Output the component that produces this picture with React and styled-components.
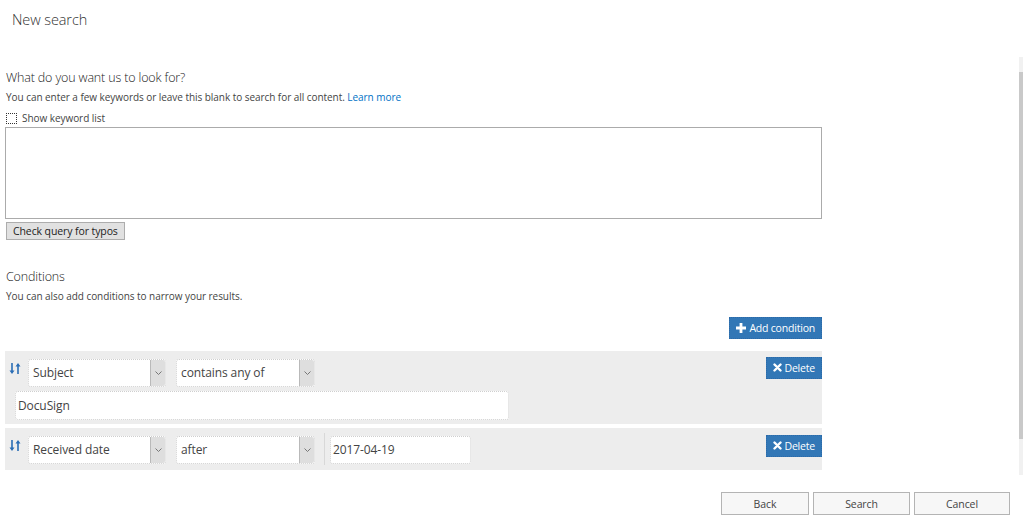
import React from 'react';
import styled, { createGlobalStyle } from 'styled-components';

const GlobalStyle = createGlobalStyle`
  html, body {
    margin: 0;
    padding: 0;
    background: #ffffff;
  }

  body {
    font-family: "Open Sans", "Noto Sans", sans-serif;
    color: #333;
  }
`;

const Page = styled.div`
  display: flex;
  width: 1024px;
  height: 521px;
  overflow: hidden;
`;

const Main = styled.main`
  flex: 1;
  padding-left: 5px;
`;

const Title = styled.h1`
  margin: 0;
  padding: 10px 0 0 7px;
  height: 69px;
  box-sizing: border-box;
  font-size: 14.5px;
  font-weight: 300;
  color: #333;
  letter-spacing: -0.1px;
`;

const Section = styled.section`
  width: 817px;
`;

const Heading = styled.h2`
  margin: 0 0 0 1px;
  font-size: 12.5px;
  line-height: 18px;
  font-weight: 300;
  color: #222;
  letter-spacing: -0.15px;
`;

const Hint = styled.p`
  margin: 2px 0 0 1px;
  font-size: 10px;
  line-height: 16px;
  color: #444;
  letter-spacing: -0.05px;

  a {
    color: #0072c6;
    text-decoration: none;
  }
`;

const CheckRow = styled.label`
  display: flex;
  align-items: center;
  gap: 5px;
  margin: 6px 0 0 1px;
  height: 14px;
  font-size: 10px;
  color: #444;
  letter-spacing: -0.05px;
`;

const CheckBox = styled.span`
  width: 9px;
  height: 9px;
  border: 1px dotted #333;
  background: #fff;
`;

const KeywordBox = styled.div`
  margin-top: 2px;
  height: 92px;
  box-sizing: border-box;
  border: 1px solid #ababab;
  background: #fff;
`;

const GrayButton = styled.button`
  display: block;
  margin: 3px 0 0 1px;
  height: 18px;
  padding: 0 6px;
  border: 1px solid #adadad;
  background: #e1e1e1;
  font-family: inherit;
  font-size: 10.5px;
  color: #222;
  letter-spacing: -0.1px;
`;

const ConditionsHeading = styled(Heading)`
  margin-top: 28px;
`;

const Toolbar = styled.div`
  display: flex;
  justify-content: flex-end;
  margin-top: 13px;
`;

const BlueButton = styled.button`
  display: inline-flex;
  align-items: center;
  gap: 3px;
  height: 22px;
  padding: 0 6px;
  border: 1px dotted #2c6aa8;
  background: #3277b6;
  color: #fff;
  font-family: inherit;
  font-size: 10.5px;
  letter-spacing: -0.2px;
`;

const ConditionRow = styled.div`
  position: relative;
  margin-top: ${(p) => p.$gap}px;
  padding: 8px 0 ${(p) => p.$bottom}px 4px;
  background: #ededed;
  display: flex;
  flex-direction: column;
  gap: 4px;
`;

const Line = styled.div`
  display: flex;
  align-items: flex-start;
  gap: 10px;
`;

const SortIcon = styled.span`
  width: 14px;
  height: 12px;
  margin-top: -2px;
  margin-right: -5px;
  color: #2a6db5;
`;

const SelectBox = styled.div`
  display: flex;
  width: ${(p) => p.$width}px;
  height: 28px;
  box-sizing: border-box;
  border: 1px dotted #cfcfcf;
  border-radius: 3px;
  background: #fff;
  overflow: hidden;
`;

const SelectText = styled.span`
  flex: 1;
  padding-left: 4px;
  font-size: 12px;
  line-height: 26px;
  color: #444;
  letter-spacing: -0.1px;
`;

const SelectArrow = styled.span`
  width: 14px;
  display: flex;
  align-items: center;
  justify-content: center;
  background: #dedede;
  border-left: 1px solid #b9b9b9;
  color: #777;
`;

const TextBox = styled.div`
  width: ${(p) => p.$width}px;
  height: ${(p) => p.$height}px;
  margin-left: ${(p) => p.$indent}px;
  box-sizing: border-box;
  padding-left: 2px;
  border: 1px dotted #cfcfcf;
  border-radius: 3px;
  background: #fff;
  font-size: 12px;
  line-height: ${(p) => p.$height - 2}px;
  color: #444;
  letter-spacing: -0.1px;
`;

const Divider = styled.span`
  width: 1px;
  height: 32px;
  margin: -3px -5px 0 -1px;
  background: #d8d8d8;
`;

const DeleteSlot = styled.div`
  position: absolute;
  top: ${(p) => p.$top}px;
  right: 0;
`;

const Footer = styled.div`
  display: flex;
  justify-content: flex-end;
  gap: 4px;
  margin: 22px 9px 0 0;
`;

const FooterButton = styled.button`
  width: ${(p) => p.$width}px;
  height: 23px;
  border: 1px solid #b4b4b4;
  background: #f7f7f7;
  font-family: inherit;
  font-size: 10.5px;
  color: #444;
  letter-spacing: -0.1px;
`;

const Rail = styled.div`
  width: 4px;
  margin: 57px 1px 0 0;
  height: 418px;
  background: #f1f1f1;
  display: flex;
  flex-direction: column;
`;

const Thumb = styled.div`
  margin-top: 15px;
  height: 367px;
  background: #c9c9c9;
`;

const Sort = () => (
  <svg width="12" height="11" viewBox="0 0 12 11" fill="currentColor">
    <path d="M2.2 0h1.6v7.5h1.7L3 11 0.5 7.5h1.7z" />
    <path d="M8.2 11h1.6V3.5h1.7L9 0 6.5 3.5h1.7z" />
  </svg>
);

const Chevron = () => (
  <svg width="7" height="4" viewBox="0 0 7 4" fill="none" stroke="currentColor" strokeWidth="1">
    <path d="M0.5 0.5l3 3 3-3" />
  </svg>
);

const Plus = () => (
  <svg width="10" height="10" viewBox="0 0 10 10" fill="#fff">
    <path d="M3.6 0h2.8v3.6H10v2.8H6.4V10H3.6V6.4H0V3.6h3.6z" />
  </svg>
);

const Cross = () => (
  <svg width="9" height="9" viewBox="0 0 9 9" fill="none" stroke="#fff" strokeWidth="2.4" strokeLinecap="round">
    <path d="M1.5 1.5l6 6M7.5 1.5l-6 6" />
  </svg>
);

const Select = ({ width, value }) => (
  <SelectBox $width={width}>
    <SelectText>{value}</SelectText>
    <SelectArrow>
      <Chevron />
    </SelectArrow>
  </SelectBox>
);

const DeleteButton = ({ top }) => (
  <DeleteSlot $top={top}>
    <BlueButton>
      <Cross /> Delete
    </BlueButton>
  </DeleteSlot>
);

const App = () => (
  <Page>
    <GlobalStyle />
    <Main>
      <Title>New search</Title>
      <Section>
        <Heading>What do you want us to look for?</Heading>
        <Hint>
          You can enter a few keywords or leave this blank to search for all content.{' '}
          <a href="#learn">Learn more</a>
        </Hint>
        <CheckRow>
          <CheckBox /> Show keyword list
        </CheckRow>
        <KeywordBox />
        <GrayButton>Check query for typos</GrayButton>

        <ConditionsHeading>Conditions</ConditionsHeading>
        <Hint>You can also add conditions to narrow your results.</Hint>

        <Toolbar>
          <BlueButton>
            <Plus /> Add condition
          </BlueButton>
        </Toolbar>

        <ConditionRow $gap={12} $bottom={4}>
          <Line>
            <SortIcon>
              <Sort />
            </SortIcon>
            <Select width={138} value="Subject" />
            <Select width={139} value="contains any of" />
          </Line>
          <TextBox $width={494} $height={29} $indent={6}>
            DocuSign
          </TextBox>
          <DeleteButton top={4} />
        </ConditionRow>

        <ConditionRow $gap={4} $bottom={5}>
          <Line>
            <SortIcon>
              <Sort />
            </SortIcon>
            <Select width={138} value="Received date" />
            <Select width={139} value="after" />
            <Divider />
            <TextBox $width={141} $height={28} $indent={0}>
              2017-04-19
            </TextBox>
          </Line>
          <DeleteButton top={5} />
        </ConditionRow>
      </Section>

      <Footer>
        <FooterButton $width={88}>Back</FooterButton>
        <FooterButton $width={97}>Search</FooterButton>
        <FooterButton $width={96}>Cancel</FooterButton>
      </Footer>
    </Main>
    <Rail>
      <Thumb />
    </Rail>
  </Page>
);

export default App;
